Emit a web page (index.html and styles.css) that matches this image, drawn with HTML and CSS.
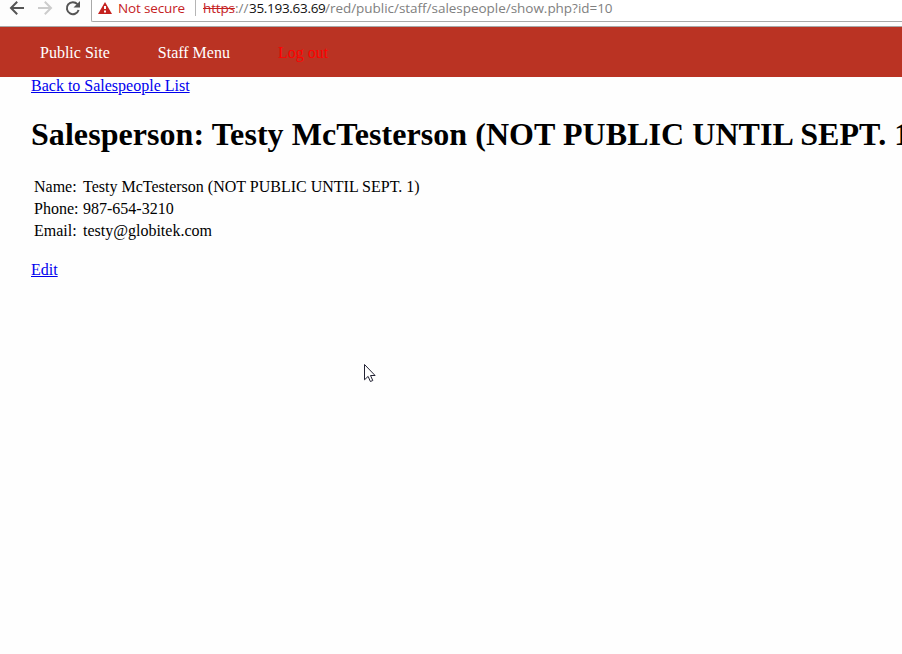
FILE: index.html
```
<!DOCTYPE html>
<html lang="en">
<head>
<meta charset="utf-8">
<title>Staff: Salesperson</title>
<link rel="stylesheet" href="styles.css">
</head>
<body>
<div class="toolbar">
  <svg class="buttons" width="91" height="25" viewBox="0 0 91 25" fill="none" stroke-width="2">
    <path stroke="#555" d="M24 8H11.5M17.2 1.8L11 8l6.2 6.2"/>
    <path stroke="#ccc" d="M38 8h12.5M44.8 1.8L51 8l-6.2 6.2"/>
    <path stroke="#555" d="M77.4 4.2A6 6 0 1 0 78.6 10"/>
    <path fill="#555" d="M80 1v6.5h-6.5z"/>
  </svg>
  <div class="address">
    <svg class="warning" width="14" height="12" viewBox="0 0 14 12">
      <path fill="#c5221f" d="M7 0l7 12H0z"/>
      <path fill="#fff" d="M6 4h2v3H6zM6 8.5h2v2H6z"/>
    </svg>
    <span class="insecure">Not secure</span>
    <span class="divider"></span>
    <span class="url"><span class="scheme">https</span><span class="slashes">://</span><span class="host">35.193.63.69</span><span class="path">/red/public/staff/salespeople/show.php?id=10</span></span>
  </div>
</div>
<nav class="menu">
  <a class="public">Public Site</a>
  <a class="staff">Staff Menu</a>
  <a class="logout">Log out</a>
</nav>
<main class="content">
  <a class="link" href="#">Back to Salespeople List</a>
  <h1>Salesperson: Testy McTesterson (NOT PUBLIC UNTIL SEPT. 1)</h1>
  <table>
    <tr><td>Name:</td><td>Testy McTesterson (NOT PUBLIC UNTIL SEPT. 1)</td></tr>
    <tr><td>Phone:</td><td>987-654-3210</td></tr>
    <tr><td>Email:</td><td>testy@globitek.com</td></tr>
  </table>
  <a class="link edit" href="#">Edit</a>
</main>
<svg class="cursor" width="14" height="21" viewBox="0 0 14 21">
  <path fill="#fff" stroke="#223" d="M1.5 1.5v15.3l3.6-3.4 2.3 5.1 2.4-1-2.3-5h4.6z"/>
</svg>
</body>
</html>
```
FILE: styles.css
```
body {
  margin: 0;
  height: 654px;
  overflow: hidden;
  background: #fefefe;
  color: #000;
  font: 16px/18px "Liberation Serif", serif;
}
.toolbar {
  display: flex;
  align-items: flex-start;
  box-sizing: border-box;
  height: 27px;
  border-bottom: 1px solid #a8a8a8;
  background: #fdfdfd;
}
.buttons { flex: none; }
.address {
  display: flex;
  flex: 1;
  box-sizing: border-box;
  height: 22px;
  border: solid #a9a9a9;
  border-width: 0 0 1px 1px;
  border-bottom-left-radius: 2px;
  padding-left: 6px;
  background: #fff;
  font: 13.5px/17px "Open Sans", "Noto Sans", sans-serif;
  white-space: nowrap;
}
.warning { margin-top: 2px; }
.insecure { width: 77px; margin-left: 6px; color: #c5221f; letter-spacing: -0.15px; }
.divider { width: 1px; height: 16px; margin-right: 7px; background: #b5b5b5; }
.url { display: flex; color: #808080; }
.url span { flex: none; }
.scheme { width: 32px; color: #c5221f; text-decoration: line-through; letter-spacing: -0.15px; }
.slashes { width: 14px; }
.host { width: 76px; color: #111; letter-spacing: -0.3px; }
.path { letter-spacing: -0.03px; }
.menu {
  display: flex;
  gap: 48px;
  height: 50px;
  padding-left: 40px;
  background: #ba3323;
  color: #fff;
  line-height: 52px;
}
.logout { color: #f00; }
.content { padding-left: 31px; white-space: nowrap; }
.link { display: block; width: max-content; color: #00e; }
h1 { margin: 21px 0 22px; font-size: 32px; line-height: 37px; letter-spacing: 0.06px; }
table { border-spacing: 2px; }
td { padding: 1px; }
td:first-child { width: 45px; }
.edit { margin-top: 18px; }
.cursor { position: absolute; left: 363px; top: 363px; }
```
